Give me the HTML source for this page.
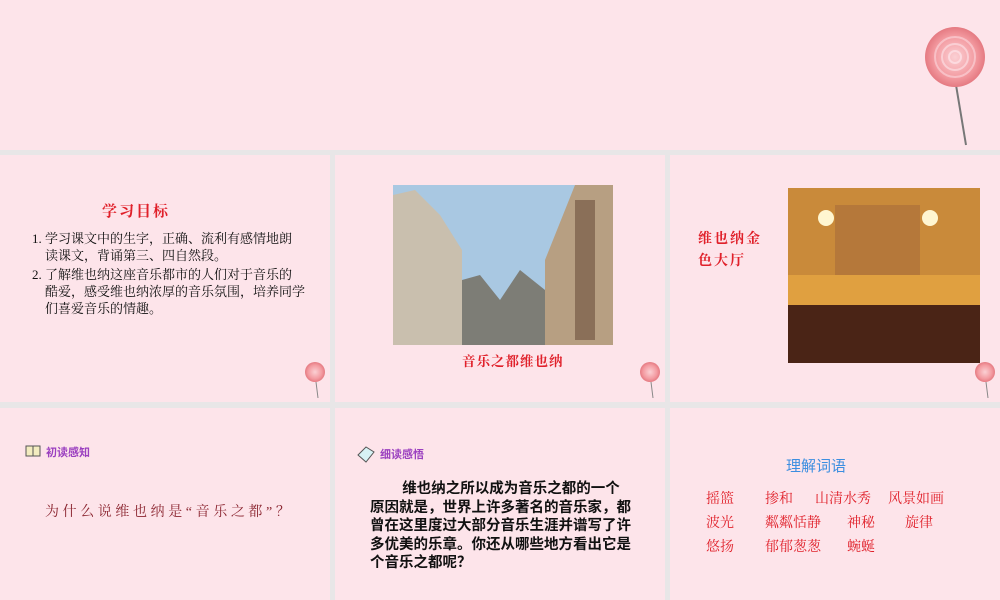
<!DOCTYPE html>
<html><head><meta charset="utf-8"><style>
*{margin:0;padding:0}
body{width:1000px;height:600px;background:#e8e6e7;position:relative;overflow:hidden;font-family:"Liberation Sans","Noto Sans CJK SC",sans-serif}
.p{position:absolute;background:#fde4ea}
.a{position:absolute;white-space:nowrap}
.red{color:#e0202a;font-family:"Liberation Serif","Noto Serif CJK SC",serif;font-weight:bold}
.lp{position:absolute}
</style></head><body>
<div class="p" style="left:0;top:0;width:1000px;height:150px"></div>
<div class="p" style="left:0;top:155px;width:330px;height:247px"></div>
<div class="p" style="left:335px;top:155px;width:330px;height:247px"></div>
<div class="p" style="left:670px;top:155px;width:330px;height:247px"></div>
<div class="p" style="left:0;top:408px;width:330px;height:192px"></div>
<div class="p" style="left:335px;top:408px;width:330px;height:192px"></div>
<div class="p" style="left:670px;top:408px;width:330px;height:192px"></div>

<svg class="lp" style="left:0;top:0" width="1000" height="600">
<defs><radialGradient id="g" cx="50%" cy="50%" r="50%"><stop offset="0" stop-color="#fbd0d4"/><stop offset="0.7" stop-color="#f39aa0"/><stop offset="1" stop-color="#e57a82"/></radialGradient>
<clipPath id="c"><circle cx="955" cy="57" r="28"/></clipPath></defs>
<line x1="956" y1="85" x2="966" y2="145" stroke="#777" stroke-width="2"/>
<circle cx="955" cy="57" r="30" fill="url(#g)"/>
<g clip-path="url(#c)"><circle cx="955" cy="57" r="6" fill="none" stroke="#fde4ea" stroke-width="2" opacity=".7"/><circle cx="955" cy="57" r="13" fill="none" stroke="#fde4ea" stroke-width="2" opacity=".6"/><circle cx="955" cy="57" r="20" fill="none" stroke="#fde4ea" stroke-width="2" opacity=".5"/></g>
<g>
<line x1="316" y1="382" x2="318" y2="398" stroke="#888" stroke-width="1"/><circle cx="315" cy="372" r="10" fill="url(#g)"/>
<line x1="651" y1="382" x2="653" y2="398" stroke="#888" stroke-width="1"/><circle cx="650" cy="372" r="10" fill="url(#g)"/>
<line x1="986" y1="382" x2="988" y2="398" stroke="#888" stroke-width="1"/><circle cx="985" cy="372" r="10" fill="url(#g)"/>
</g>
<rect x="393" y="185" width="220" height="160" fill="#a9c8e2"/>
<rect x="393" y="300" width="220" height="45" fill="#5a5048"/>
<polygon points="393,195 415,190 440,215 462,250 462,345 393,345" fill="#c9bfae"/>
<polygon points="462,280 480,275 500,300 520,270 545,290 545,345 462,345" fill="#7d7d76"/>
<polygon points="545,260 575,185 613,185 613,345 545,345" fill="#b79f82"/>
<rect x="575" y="200" width="20" height="140" fill="#8a6f58"/>
<rect x="788" y="188" width="192" height="175" fill="#9c5a1e"/>
<rect x="788" y="188" width="192" height="90" fill="#c98a3a"/>
<rect x="835" y="205" width="85" height="70" fill="#b5783a"/>
<rect x="788" y="275" width="192" height="30" fill="#e0a040"/>
<rect x="788" y="305" width="192" height="58" fill="#4a2416"/>
<circle cx="826" cy="218" r="8" fill="#fff6d0"/><circle cx="930" cy="218" r="8" fill="#fff6d0"/>
<rect x="26" y="446" width="14" height="10" fill="#f3ecc0" stroke="#555" stroke-width="1"/>
<line x1="33" y1="446" x2="33" y2="456" stroke="#555"/>
<polygon points="358,455 366,447 374,452 366,462" fill="#d7f2f5" stroke="#555"/>
</svg>

<div class="a red" style="left:102px;top:200px;font-size:15px;letter-spacing:2px">学习目标</div>
<div class="a" style="left:32px;top:230px;font-size:13px;line-height:17px;color:#111;font-family:'Liberation Serif','Noto Serif CJK SC',serif">1. 学习课文中的生字，正确、流利有感情地朗<br>&nbsp;&nbsp;&nbsp;&nbsp;读课文，背诵第三、四自然段。<br><div style="height:2px"></div>2. 了解维也纳这座音乐都市的人们对于音乐的<br>&nbsp;&nbsp;&nbsp;&nbsp;酷爱，感受维也纳浓厚的音乐氛围，培养同学<br>&nbsp;&nbsp;&nbsp;&nbsp;们喜爱音乐的情趣。</div>

<div class="a red" style="left:462px;top:350px;font-size:13.5px;letter-spacing:1px">音乐之都维也纳</div>
<div class="a red" style="left:698px;top:229px;font-size:14px;line-height:22px;letter-spacing:2px">维也纳金<br>色大厅</div>

<div class="a" style="left:46px;top:444px;font-size:11px;color:#9b40c0;font-weight:bold">初读感知</div>
<div class="a" style="left:45px;top:501px;font-size:14px;color:#8b2530;letter-spacing:3.6px;font-family:'Liberation Serif','Noto Serif CJK SC',serif">为什么说维也纳是“音乐之都”？</div>

<div class="a" style="left:380px;top:446px;font-size:11px;color:#9b40c0;font-weight:bold">细读感悟</div>
<div class="a" style="left:370px;top:480px;font-size:14.5px;line-height:18.5px;color:#111;font-weight:bold">&nbsp;&nbsp;&nbsp;&nbsp;&nbsp;&nbsp;&nbsp;&nbsp;维也纳之所以成为音乐之都的一个<br>原因就是，世界上许多著名的音乐家，都<br>曾在这里度过大部分音乐生涯并谱写了许<br>多优美的乐章。你还从哪些地方看出它是<br>个音乐之都呢？</div>

<div class="a" style="left:786px;top:455px;font-size:15px;color:#3c8ee0">理解词语</div>
<div class="a red" style="left:706px;top:488px;font-size:14px;font-weight:normal">
<span style="position:absolute;left:0">摇篮</span><span style="position:absolute;left:59px">掺和</span><span style="position:absolute;left:109px">山清水秀</span><span style="position:absolute;left:182px">风景如画</span></div>
<div class="a red" style="left:706px;top:512px;font-size:14px;font-weight:normal">
<span style="position:absolute;left:0">波光</span><span style="position:absolute;left:59px">粼粼恬静</span><span style="position:absolute;left:141px">神秘</span><span style="position:absolute;left:199px">旋律</span></div>
<div class="a red" style="left:706px;top:536px;font-size:14px;font-weight:normal">
<span style="position:absolute;left:0">悠扬</span><span style="position:absolute;left:59px">郁郁葱葱</span><span style="position:absolute;left:141px">蜿蜒</span></div>
</body></html>
